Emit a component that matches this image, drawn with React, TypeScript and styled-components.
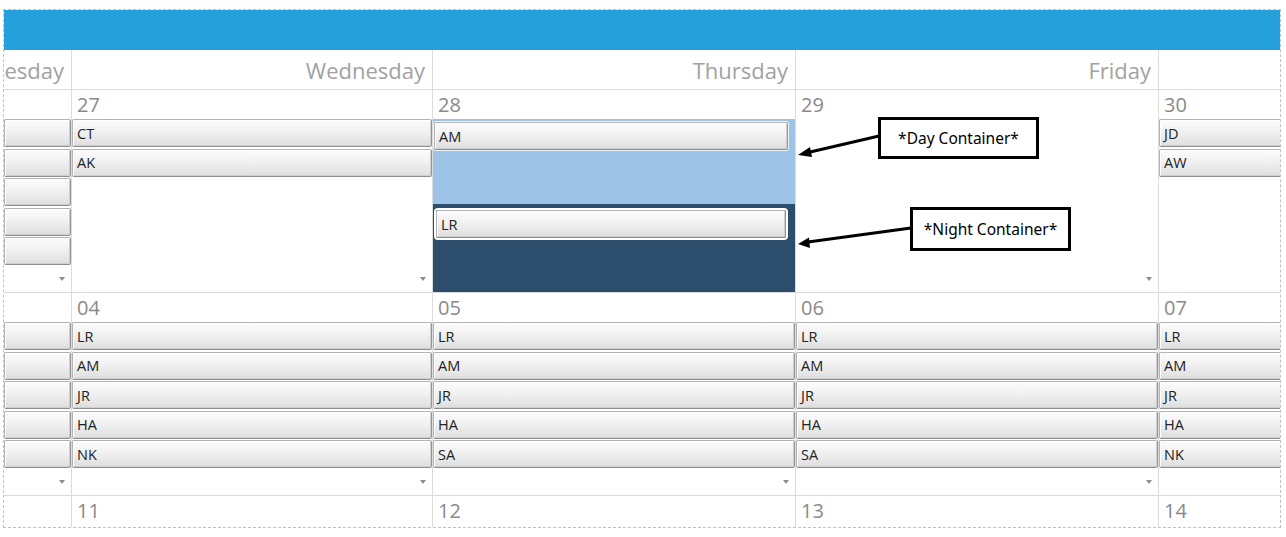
import styled, { createGlobalStyle } from "styled-components";

const GlobalStyle = createGlobalStyle`
  html, body {
    margin: 0;
    padding: 0;
    background: #ffffff;
  }
  * {
    box-sizing: border-box;
  }
`;

const Page = styled.div`
  position: relative;
  width: 1286px;
  height: 537px;
  padding: 9px 0 0 3px;
  font-family: "Open Sans", "Noto Sans", sans-serif;
`;

const Frame = styled.div`
  width: 1278px;
  height: 519px;
  border: 1px dashed #b7c5d3;
  overflow: hidden;
  background: #ffffff;
`;

const TopBar = styled.div`
  height: 40px;
  background: #26a0da;
`;

const Grid = styled.div`
  display: grid;
  grid-template-columns: 67px 361px 363px 363px 363px;
`;

const DayName = styled.div<{ $first?: boolean }>`
  height: 40px;
  display: flex;
  justify-content: flex-end;
  align-items: center;
  padding-right: 7px;
  border-left: ${(p) => (p.$first ? "none" : "1px solid #dcdcdc")};
  border-bottom: 1px solid #dcdcdc;
  font-size: 22px;
  color: #a2a2a2;
  white-space: nowrap;
  overflow: hidden;
`;

const Cell = styled.div<{ $first?: boolean; $short?: boolean }>`
  height: ${(p) => (p.$short ? "40px" : "203px")};
  display: flex;
  flex-direction: column;
  border-left: ${(p) => (p.$first ? "none" : "1px solid #dcdcdc")};
  border-bottom: 1px solid #dcdcdc;
  overflow: hidden;
`;

const DateLabel = styled.div`
  height: 29px;
  flex-shrink: 0;
  padding-left: 5px;
  font-size: 20px;
  line-height: 29px;
  color: #8a8a8a;
`;

const ShiftList = styled.div`
  display: flex;
  flex-direction: column;
  gap: 1.5px;
`;

const Shift = styled.div<{ $ring?: "day" | "night" }>`
  height: 28px;
  display: flex;
  align-items: center;
  padding-left: 4px;
  font-size: 14.5px;
  color: #222222;
  white-space: nowrap;
  border: 1px solid #b3b3b3;
  border-right-color: #959595;
  border-bottom-color: #8e8e8e;
  border-radius: 2px;
  background: linear-gradient(#fcfcfc 0%, #f1f1f1 45%, #dedede 100%);
  box-shadow: inset 1px 1px 0 #ffffff, inset -1px -1px 0 #cfcfcf
    ${(p) =>
      p.$ring === "night"
        ? ", 0 0 0 2px #ffffff"
        : p.$ring === "day"
          ? ", 0 0 0 1px #eef3f8"
          : ""};
`;

const DayContainer = styled.div`
  height: 85px;
  flex-shrink: 0;
  padding: 3px 7px 0 1px;
  background: #9dc3e6;
`;

const NightContainer = styled.div`
  flex: 1;
  padding: 6px 9px 0 3px;
  background: #2c4d6b;
`;

const Footer = styled.div`
  margin-top: auto;
  height: 26px;
  display: flex;
  justify-content: flex-end;
  align-items: center;
  padding-right: 6px;
  flex-shrink: 0;
`;

const DropArrow = styled.span`
  width: 0;
  height: 0;
  border-left: 3px solid transparent;
  border-right: 3px solid transparent;
  border-top: 4px solid #8c8c8c;
`;

const Note = styled.div<{ $left: number; $top: number; $h: number }>`
  position: absolute;
  left: ${(p) => p.$left}px;
  top: ${(p) => p.$top}px;
  width: 161px;
  height: ${(p) => p.$h}px;
  border: 3px solid #000000;
  background: #ffffff;
  display: flex;
  align-items: center;
  justify-content: center;
  font-family: "Noto Sans", "Open Sans", sans-serif;
  font-size: 15.5px;
  color: #000000;
`;

const Arrows = styled.svg`
  position: absolute;
  left: 0;
  top: 0;
  pointer-events: none;
`;

type Week = {
  dates: string[];
  shifts: string[][];
};

const dayNames = ["Tuesday", "Wednesday", "Thursday", "Friday", ""];

const weeks: Week[] = [
  {
    dates: ["", "27", "28", "29", "30"],
    shifts: [["", "", "", "", ""], ["CT", "AK"], [], [], ["JD", "AW"]],
  },
  {
    dates: ["", "04", "05", "06", "07"],
    shifts: [
      ["", "", "", "", ""],
      ["LR", "AM", "JR", "HA", "NK"],
      ["LR", "AM", "JR", "HA", "SA"],
      ["LR", "AM", "JR", "HA", "SA"],
      ["LR", "AM", "JR", "HA", "NK"],
    ],
  },
];

function ShiftCell({ date, names, first, last }: { date: string; names: string[]; first: boolean; last: boolean }) {
  return (
    <Cell $first={first}>
      <DateLabel>{date}</DateLabel>
      <ShiftList>
        {names.map((n, i) => (
          <Shift key={i}>{n}</Shift>
        ))}
      </ShiftList>
      {!last && (
        <Footer>
          <DropArrow />
        </Footer>
      )}
    </Cell>
  );
}

function SplitCell({ date }: { date: string }) {
  return (
    <Cell>
      <DateLabel>{date}</DateLabel>
      <DayContainer>
        <Shift $ring="day">AM</Shift>
      </DayContainer>
      <NightContainer>
        <Shift $ring="night">LR</Shift>
      </NightContainer>
    </Cell>
  );
}

export default function App() {
  return (
    <>
      <GlobalStyle />
      <Page>
        <Frame>
          <TopBar />
          <Grid>
            {dayNames.map((d, i) => (
              <DayName key={i} $first={i === 0}>
                {d}
              </DayName>
            ))}

            {weeks.map((w, wi) =>
              w.dates.map((date, ci) =>
                wi === 0 && ci === 2 ? (
                  <SplitCell key={`${wi}-${ci}`} date={date} />
                ) : (
                  <ShiftCell
                    key={`${wi}-${ci}`}
                    date={date}
                    names={w.shifts[ci]}
                    first={ci === 0}
                    last={ci === 4}
                  />
                )
              )
            )}

            {["", "11", "12", "13", "14"].map((d, i) => (
              <Cell key={`last-${i}`} $first={i === 0} $short>
                <DateLabel>{d}</DateLabel>
              </Cell>
            ))}
          </Grid>
        </Frame>

        <Note $left={878} $top={117} $h={42}>
          *Day Container*
        </Note>
        <Note $left={910} $top={207} $h={44}>
          *Night Container*
        </Note>

        <Arrows width="1286" height="537" viewBox="0 0 1286 537">
          <line x1="879" y1="136" x2="808" y2="152.5" stroke="#000" strokeWidth="3" />
          <polygon points="798,155 810,147 812,157" fill="#000" />
          <line x1="911" y1="228" x2="808" y2="242" stroke="#000" strokeWidth="3" />
          <polygon points="798,244 809,237.5 810,248" fill="#000" />
        </Arrows>
      </Page>
    </>
  );
}
